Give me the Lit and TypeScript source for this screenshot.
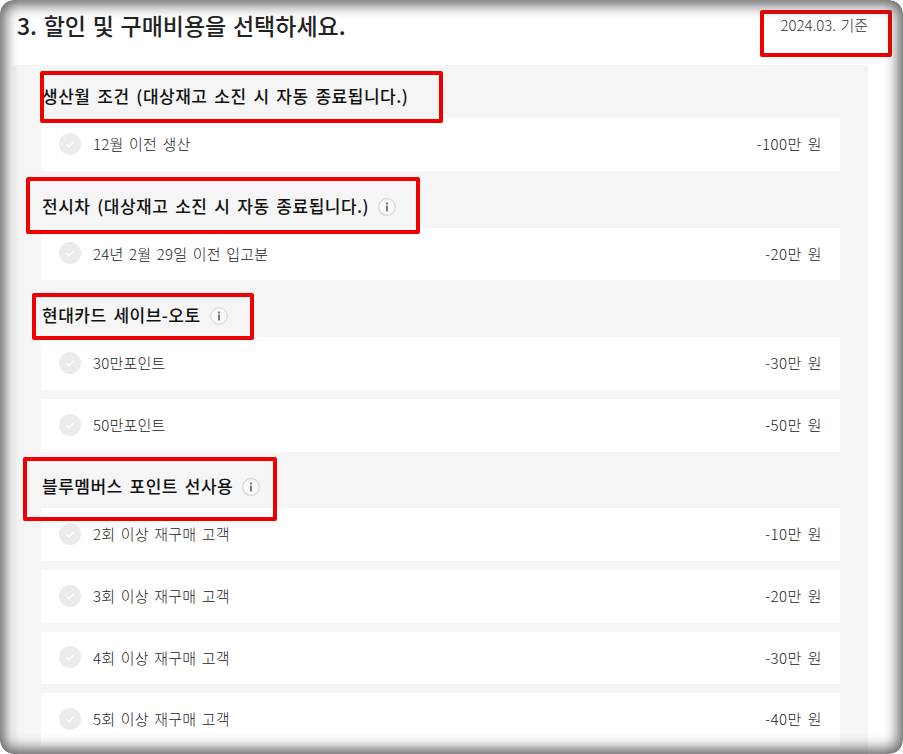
import { LitElement, html, css, svg } from "lit";
import { customElement } from "lit/decorators.js";

interface Group {
  title: string;
  info: boolean;
  headH: number;
  items: [string, string, number][];
}

const groups: Group[] = [
  { title: "생산월 조건 (대상재고 소진 시 자동 종료됩니다.)", info: false, headH: 53, items: [["12월 이전 생산", "-100만 원", 53]] },
  { title: "전시차 (대상재고 소진 시 자동 종료됩니다.)", info: true, headH: 57, items: [["24년 2월 29일 이전 입고분", "-20만 원", 52]] },
  { title: "현대카드 세이브-오토", info: true, headH: 57, items: [["30만포인트", "-30만 원", 53], ["50만포인트", "-50만 원", 53]] },
  {
    title: "블루멤버스 포인트 선사용", info: true, headH: 56,
    items: [
      ["2회 이상 재구매 고객", "-10만 원", 53],
      ["3회 이상 재구매 고객", "-20만 원", 53],
      ["4회 이상 재구매 고객", "-30만 원", 52],
      ["5회 이상 재구매 고객", "-40만 원", 53],
    ],
  },
];

const check = svg`<svg class="check" width="22" height="22" viewBox="0 0 22 22"><circle cx="11" cy="11" r="11" fill="#ebebeb"/><path d="M7.2 11.2l2.7 2.6 4.9-5" fill="none" stroke="#fff" stroke-width="1.5"/></svg>`;

const info = svg`<svg class="info" width="18" height="18" viewBox="0 0 18 18"><circle cx="9" cy="9" r="8.3" fill="#f9f9f9" stroke="#d6d6d6" stroke-width="1.2"/><rect x="8" y="7.6" width="2" height="5.8" fill="#777"/><rect x="8" y="4.5" width="2" height="2" fill="#777"/></svg>`;

const marks: [number, number, number, number][] = [
  [40, 71, 403, 52],
  [26, 177, 394, 57],
  [32, 293, 222, 47],
  [23, 457, 254, 64],
  [760, 10, 132, 47],
];

@customElement("app-root")
export class AppRoot extends LitElement {
  static styles = css`
    :host {
      display: block;
      position: relative;
      width: 903px;
      height: 754px;
      overflow: hidden;
      background: #fff;
      font-family: "Noto Sans CJK KR", "Noto Sans", sans-serif;
      color: #333;
    }
    .head {
      height: 65px;
      display: flex;
      justify-content: space-between;
      align-items: flex-start;
      padding: 0 35px 0 17px;
      box-sizing: border-box;
    }
    h1 {
      margin: 9px 0 0;
      font-size: 23px;
      line-height: 32px;
      font-weight: 500;
      color: #222;
      word-spacing: 1.5px;
    }
    .date {
      margin-top: 15px;
      font-size: 15px;
      line-height: 20px;
      font-weight: 300;
      color: #333;
      word-spacing: 1px;
    }
    .panel {
      margin: 0 35px 0 13px;
      padding: 0 28px;
      background: #f5f5f5;
      height: 689px;
    }
    .ghead {
      display: flex;
      align-items: flex-end;
      gap: 9px;
      box-sizing: border-box;
      padding-bottom: 13px;
      margin-left: 1px;
      font-size: 17px;
      line-height: 18px;
      font-weight: 500;
      color: #111;
      letter-spacing: 0.5px;
      word-spacing: 2.5px;
    }
    .card {
      background: #fff;
      display: flex;
      align-items: center;
      justify-content: space-between;
      box-sizing: border-box;
      padding: 0 18px;
      font-size: 15px;
      font-weight: 300;
      color: #222;
    }
    .card + .card {
      margin-top: 9px;
    }
    .left {
      display: flex;
      align-items: center;
      gap: 12px;
      margin-top: -2px;
      letter-spacing: 0.2px;
      word-spacing: 2px;
    }
    .amount {
      margin-bottom: 2px;
      letter-spacing: 0.5px;
      word-spacing: 2px;
    }
    .check,
    .info {
      display: block;
      flex: none;
    }
    .info {
      margin-bottom: -1px;
    }
    .mark {
      position: absolute;
      box-sizing: border-box;
      border: 4px solid #ee0000;
      border-radius: 2px;
      pointer-events: none;
    }
    .vignette {
      position: absolute;
      inset: 0;
      border-radius: 14px;
      box-shadow: inset 0 0 14px 5px rgba(70, 70, 70, 0.85);
      pointer-events: none;
    }
    .corners {
      position: absolute;
      inset: -6px;
      border: 6px solid #fff;
      border-radius: 20px;
      pointer-events: none;
    }
  `;

  render() {
    return html`
      <div class="head">
        <h1>3. 할인 및 구매비용을 선택하세요.</h1>
        <div class="date">2024.03. 기준</div>
      </div>
      <div class="panel">
        ${groups.map(
          (g) => html`
            <div class="ghead" style="height:${g.headH}px">
              <span>${g.title}</span>${g.info ? info : null}
            </div>
            ${g.items.map(
              ([l, r, h]) => html`
                <div class="card" style="height:${h}px">
                  <div class="left">${check}<span>${l}</span></div>
                  <span class="amount">${r}</span>
                </div>
              `
            )}
          `
        )}
      </div>
      ${marks.map(
        ([x, y, w, h]) =>
          html`<div class="mark" style="left:${x}px;top:${y}px;width:${w}px;height:${h}px"></div>`
      )}
      <div class="vignette"></div>
      <div class="corners"></div>
    `;
  }
}
